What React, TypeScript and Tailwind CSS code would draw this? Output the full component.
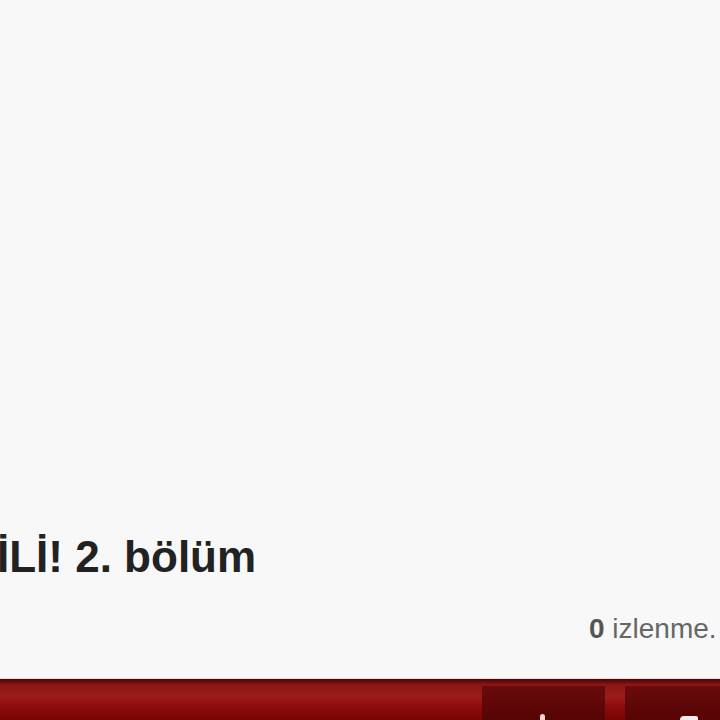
export default function App() {
  return (
    <div className="h-[720px] overflow-hidden flex flex-col bg-[#f8f8f8]" style={{ fontFamily: '"Liberation Sans", Arial, sans-serif' }}>
      {/* Video title, cut at the left edge */}
      <div className="mt-[532px] h-[49px] ml-[-3px] whitespace-nowrap text-[44px] leading-[49px] font-bold text-[#222222]">
        İLİ! 2. bölüm
      </div>

      {/* View count */}
      <div className="mt-[32px] h-[32px] pl-[589px] whitespace-nowrap text-[28px] leading-[32px] text-[#666666]">
        <span className="font-bold text-[#555555]">0</span> izlenme.
      </div>

      {/* Red toolbar */}
      <div className="mt-[33px] flex-1 flex flex-col">
        <div className="h-px bg-[#e6dcdc]" />
        <div className="flex-1 flex bg-[linear-gradient(to_bottom,#4e0606_0px,#5e0a0a_2px,#8c1616_6px,#9c1b1b_18px,#8c0c0c_28px,#7c0404_100%)]">
          <div className="w-[482px]" />
          <div className="w-[123px] mt-[7px] flex justify-center bg-[linear-gradient(to_bottom,#6a0b0b,#560404)]">
            <div className="mt-auto ml-[-2px] w-[5px] h-[6px] rounded-t-full bg-[#f1d4d8]" />
          </div>
          <div className="w-[20px]" />
          <div className="flex-1 mt-[7px] flex bg-[linear-gradient(to_bottom,#6a0b0b,#560404)]">
            <div className="mt-auto ml-[55px] w-[18px] h-[4px] rounded-tl-[4px] rounded-tr-[2px] bg-[#f4eaea]" />
          </div>
        </div>
      </div>
    </div>
  );
}
